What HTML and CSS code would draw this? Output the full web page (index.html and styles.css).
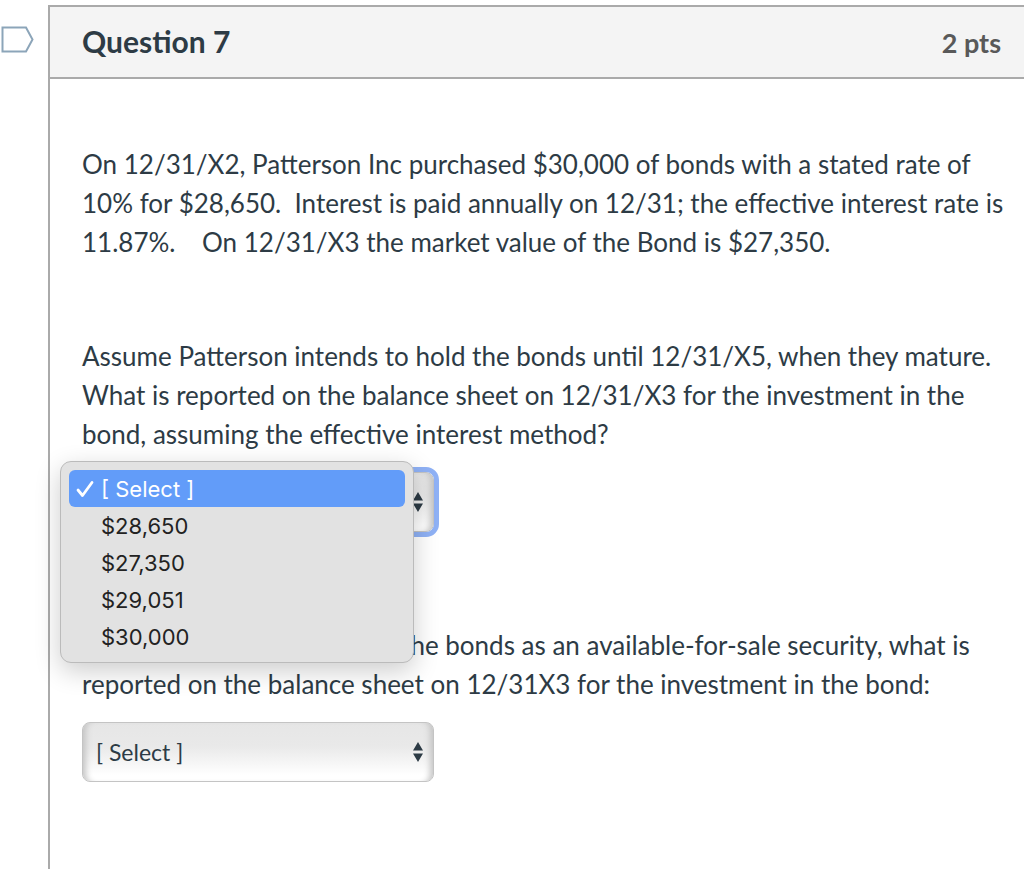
FILE: index.html
```html
<!DOCTYPE html>
<html lang="en">
<head>
    <meta charset="UTF-8">
    <meta name="viewport" content="width=device-width, initial-scale=1.0">
    <title>Question 7</title>
    <link rel="stylesheet" href="styles.css">
</head>
<body>
    <div class="quiz">
        <div class="flag-column">
            <button class="flag" type="button" aria-label="Flag question">
                <svg width="34" height="28" viewBox="0 0 34 28">
                    <path d="M2.5 1.5H26L32.5 13.5L26 25.5H2.5Z" fill="#fff" stroke="#8ca5b9" stroke-width="2"/>
                </svg>
            </button>
        </div>

        <main class="question">
            <header class="question-header">
                <h1 class="question-name">Question 7</h1>
                <span class="question-points">2 pts</span>
            </header>

            <div class="question-text">
                <p>On 12/31/X2, Patterson Inc purchased $30,000 of bonds with a stated rate of 10% for $28,650.&nbsp; Interest is paid annually on 12/31; the effective interest rate is 11.87%.&nbsp; &nbsp; On 12/31/X3 the market value of the Bond is $27,350.</p>

                <p class="answer-prompt"><label for="answer1">Assume Patterson intends to hold the bonds until 12/31/X5, when they mature. What is reported on the balance sheet on 12/31/X3 for the investment in the bond, assuming the effective interest method?</label></p>
                <div class="select-box focused">
                    <select id="answer1">
                        <option>[ Select ]</option>
                        <option>$28,650</option>
                        <option>$27,350</option>
                        <option>$29,051</option>
                        <option>$30,000</option>
                    </select>
                    <svg class="arrows" width="10" height="20" viewBox="0 0 10 20">
                        <path d="M5 0L10 8.5H0ZM0 11.5H10L5 20Z" fill="#2d3b45"/>
                    </svg>

                    <!-- open menu -->
                    <div class="menu" role="listbox" aria-label="Answer">
                        <button class="menu-item selected" type="button" role="option" aria-selected="true">
                            <svg class="check" width="18" height="18" viewBox="0 0 18 18">
                                <path d="M2 10L6.5 15.5L16 2.5" fill="none" stroke="#fff" stroke-width="2.8" stroke-linecap="round" stroke-linejoin="round"/>
                            </svg>
                            [ Select ]
                        </button>
                        <button class="menu-item" type="button" role="option">$28,650</button>
                        <button class="menu-item" type="button" role="option">$27,350</button>
                        <button class="menu-item" type="button" role="option">$29,051</button>
                        <button class="menu-item" type="button" role="option">$30,000</button>
                    </div>
                </div>

                <p class="answer-prompt"><label for="answer2">Assume Patterson classifies the bonds as an available-for-sale security, what is reported on the balance sheet on 12/31X3 for the investment in the bond:</label></p>
                <div class="select-box">
                    <select id="answer2">
                        <option>[ Select ]</option>
                    </select>
                    <svg class="arrows" width="10" height="20" viewBox="0 0 10 20">
                        <path d="M5 0L10 8.5H0ZM0 11.5H10L5 20Z" fill="#2d3b45"/>
                    </svg>
                </div>
            </div>
        </main>
    </div>
</body>
</html>
```
FILE: styles.css
```css
* {
    margin: 0;
    padding: 0;
    box-sizing: border-box;
}

body {
    background: #fff;
    color: #2d3b45;
    font-family: Lato, "Liberation Sans", sans-serif;
    font-size: 26px;
    line-height: 39px;
}

.quiz {
    display: flex;
    min-height: 100vh;
    padding-top: 5px;
}

.flag-column {
    width: 48px;
    padding-top: 21px;
}

.flag {
    display: block;
    background: none;
    border: none;
    cursor: pointer;
}

.flag svg {
    display: block;
}

.question {
    flex: 1;
    border-top: 2px solid #aaa;
    border-left: 2px solid #aaa;
}

.question-header {
    display: flex;
    justify-content: space-between;
    align-items: baseline;
    height: 72px;
    padding: 15px 23px 0 32px;
    background: #f4f4f4;
    border-bottom: 2px solid #aaa;
}

.question-name {
    font-size: 30px;
    font-weight: bold;
}

.question-points {
    color: #595959;
    font-size: 27px;
    font-weight: bold;
}

.question-text {
    padding: 66px 16px 80px 32px;
}

.answer-prompt {
    margin-top: 75px;
}

.select-box {
    position: relative;
    width: 352px;
    margin-top: 18px;
}

.select-box + .answer-prompt {
    margin-top: 94px;
}

.select-box select {
    -webkit-appearance: none;
    appearance: none;
    display: block;
    width: 100%;
    height: 60px;
    padding: 0 13px;
    border: 1px solid #c4c4c4;
    border-radius: 8px;
    background: linear-gradient(to bottom, #e6e6e6, #e9e9e9 40%, #fff 90%);
    box-shadow: inset 8px 0 6px -5px #c4c4c4, inset -8px 0 6px -5px #c4c4c4;
    color: #2d3b45;
    font-family: inherit;
    font-size: 23px;
}

.focused select {
    outline: 5px solid #8fb1f5;
}

.arrows {
    position: absolute;
    top: 20px;
    right: 11px;
    pointer-events: none;
}

.menu {
    position: absolute;
    top: -11px;
    left: -22px;
    width: 354px;
    padding: 8px 8px 7px;
    border: 1px solid #bbb;
    border-radius: 11px;
    background: #e2e2e2;
    box-shadow: 0 8px 26px rgba(0, 0, 0, 0.2);
    z-index: 1;
}

.menu-item {
    position: relative;
    display: block;
    width: 100%;
    height: 37px;
    padding-left: 32px;
    border: none;
    border-radius: 6px;
    background: none;
    color: #222;
    font-family: Inter, "Liberation Sans", sans-serif;
    font-size: 22px;
    text-align: left;
    cursor: pointer;
}

.menu-item.selected {
    background: #629cf9;
    color: #fff;
}

.check {
    position: absolute;
    top: 10px;
    left: 7px;
}
```
